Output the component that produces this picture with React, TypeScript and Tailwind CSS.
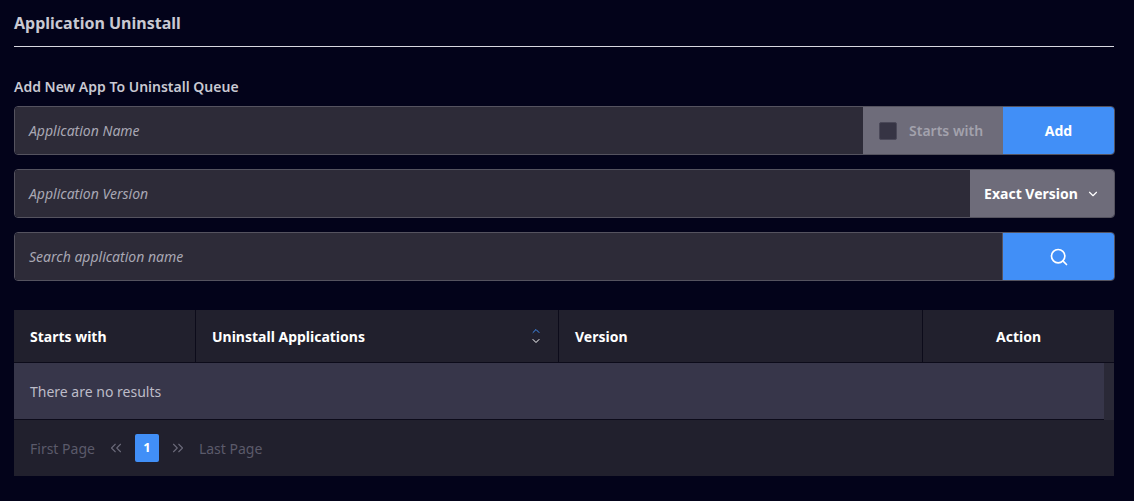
import { ChevronDown, ChevronUp, ChevronsLeft, ChevronsRight, Search } from "lucide-react";

function App() {
  return (
    <div className="min-h-screen w-full bg-[#03031a] px-[14px] pt-[12px] font-['Noto_Sans',sans-serif]">
      <h1 className="text-[16px] font-bold text-[#c9c9d2] leading-[22px]">Application Uninstall</h1>
      <div className="mt-[12px] h-px w-[1100px] bg-[#d8d8e0]" />
      <h2 className="mt-[31px] text-[14px] font-semibold text-[#c9c9d2] leading-[18px]">Add New App To Uninstall Queue</h2>

      <div className="mt-[10px] flex h-[49px] w-[1101px] overflow-hidden rounded-[4px] border border-[#55535f]">
        <div className="flex flex-1 items-center bg-[#2d2b38] px-[14px] text-[14px] italic text-[#a8a7b3]">Application Name</div>
        <div className="flex w-[140px] items-center gap-[12px] bg-[#6e6c7a] px-[16px]">
          <span className="h-[18px] w-[18px] rounded-[2px] border border-[#4a4858] bg-[#363444]" />
          <span className="text-[14px] font-semibold text-[#a3a2ad]">Starts with</span>
        </div>
        <div className="flex w-[111px] items-center justify-center bg-[#418ff7] text-[14px] font-bold text-white">Add</div>
      </div>

      <div className="mt-[14px] flex h-[49px] w-[1101px] overflow-hidden rounded-[4px] border border-[#55535f]">
        <div className="flex flex-1 items-center bg-[#2d2b38] px-[14px] text-[14px] italic text-[#a8a7b3]">Application Version</div>
        <div className="flex w-[144px] items-center justify-center gap-[8px] bg-[#6e6c7a] text-[14px] font-bold text-white">
          Exact Version <ChevronDown size={14} strokeWidth={2} />
        </div>
      </div>

      <div className="mt-[14px] flex h-[49px] w-[1101px] overflow-hidden rounded-[4px] border border-[#55535f]">
        <div className="flex flex-1 items-center border-r border-[#55535f] bg-[#2d2b38] px-[14px] text-[14px] italic text-[#a8a7b3]">Search application name</div>
        <div className="flex w-[111px] items-center justify-center bg-[#418ff7] text-white">
          <Search size={20} strokeWidth={2} />
        </div>
      </div>

      <div className="mt-[29px] w-[1100px] bg-[#21202d]">
        <div className="flex h-[53px] border-b border-[#0c0b1a] text-[14px] font-bold text-white">
          <div className="flex w-[182px] items-center border-r border-[#0c0b1a] px-[16px]">Starts with</div>
          <div className="flex w-[363px] items-center justify-between border-r border-[#0c0b1a] px-[16px]">
            Uninstall Applications
            <span className="flex flex-col items-center leading-none">
              <ChevronUp size={12} className="text-[#418ff7] -mb-[2px]" strokeWidth={2} />
              <ChevronDown size={12} className="text-white" strokeWidth={2} />
            </span>
          </div>
          <div className="flex w-[364px] items-center border-r border-[#0c0b1a] px-[16px]">Version</div>
          <div className="flex flex-1 items-center justify-center">Action</div>
        </div>
        <div className="flex h-[57px]">
          <div className="flex flex-1 items-center border-b border-[#0c0b1a] bg-[#37364a] px-[16px] text-[14px] text-[#bdbcc8]">There are no results</div>
          <div className="w-[10px] bg-[#2a2937]" />
        </div>
        <div className="flex h-[56px] items-center px-[16px] text-[14px] text-[#5b5a6a]">
          <span>First Page</span>
          <ChevronsLeft size={18} className="ml-[12px] text-[#6a6979]" strokeWidth={1.5} />
          <span className="ml-[10px] flex h-[28px] w-[24px] items-center justify-center rounded-[2px] bg-[#418ff7] text-[13px] font-bold text-white">1</span>
          <ChevronsRight size={18} className="ml-[10px] text-[#6a6979]" strokeWidth={1.5} />
          <span className="ml-[12px]">Last Page</span>
        </div>
      </div>
    </div>
  );
}

export default App;
